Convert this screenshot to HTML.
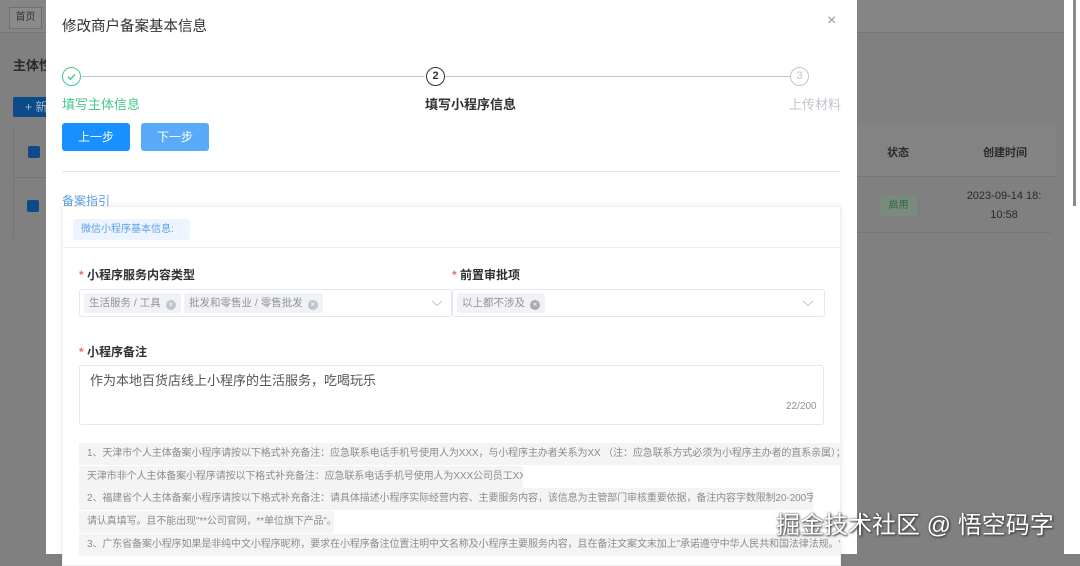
<!DOCTYPE html>
<html><head><meta charset="utf-8"><style>
*{margin:0;padding:0;box-sizing:border-box}
body{width:1080px;height:554px;overflow:hidden;position:relative;background:#808080;font-family:"Liberation Sans","Noto Sans CJK SC",sans-serif;}
.a{position:absolute}
.modal{left:46px;top:0;width:811px;height:554px;background:#fff}
.t{white-space:nowrap}
.note{position:absolute;left:79px;height:22px;background:#f4f4f5;color:#8c8c8c;font-size:10px;letter-spacing:-0.1px;line-height:22px;padding-left:8px;white-space:nowrap;overflow:hidden;border-radius:2px}
.tag{position:absolute;top:293px;height:20px;background:#f0f2f5;color:#909399;font-size:10.5px;line-height:20px;padding:0 5px;border-radius:3px;white-space:nowrap}
.x{display:inline-block;width:10px;height:10px;border-radius:50%;background:#c0c4cc;color:#fff;font-size:8px;line-height:10px;text-align:center;margin-left:5px;vertical-align:-1px}
</style></head><body>
<div class="a" style="left:0;top:0;width:1065px;height:33px;background:#858585;border-bottom:1px solid #767676"></div>
<div class="a t" style="left:9px;top:7px;width:33px;height:22px;border:1px solid #707070;color:#333;font-size:10px;line-height:20px;text-align:center;background:#8a8a8a">首页</div>
<div class="a t" style="left:13px;top:55px;font-size:13px;font-weight:bold;color:#2a2a2a">主体性</div>
<div class="a" style="left:13px;top:97px;width:40px;height:20px;background:#0d4a8a;border-radius:2px;color:#a0b8d0;font-size:12px;line-height:20px;padding-left:12px">+ 新</div>
<div class="a" style="left:13px;top:128px;width:1px;height:110px;background:#757575"></div>
<div class="a" style="left:28px;top:146px;width:12px;height:12px;background:#0d4a8a;border-radius:2px"></div>
<div class="a" style="left:27px;top:200px;width:12px;height:12px;background:#0d4a8a;border-radius:2px"></div>
<div class="a" style="left:13px;top:177px;width:33px;height:1px;background:#757575"></div>
<div class="a" style="left:857px;top:125px;width:200px;height:52px;background:#838383;border-bottom:1px solid #777"></div>
<div class="a t" style="left:887px;top:144px;font-size:11px;font-weight:bold;color:#2a2a2a">状态</div>
<div class="a t" style="left:968px;top:144px;font-size:11px;font-weight:bold;color:#2a2a2a;width:74px;text-align:center">创建时间</div>
<div class="a" style="left:880px;top:195px;width:37px;height:21px;background:#7a8a7e;color:#2e6b3f;font-size:10px;line-height:21px;text-align:center">启用</div>
<div class="a" style="left:960px;top:187px;width:88px;font-size:11px;color:#2a2a2a;text-align:center;line-height:19px">2023-09-14 18:<br>10:58</div>
<div class="a" style="left:857px;top:232px;width:195px;height:1px;background:#777"></div>
<div class="a" style="left:1064px;top:0;width:16px;height:554px;background:#fff"></div>
<div class="a" style="left:1073px;top:0;width:3px;height:206px;background:#8a8a8a"></div>

<div class="a modal"></div>
<div class="a t" style="left:62px;top:15px;font-size:14.5px;color:#303133">修改商户备案基本信息</div>
<div class="a t" style="left:827px;top:12px;font-size:16px;color:#999">×</div>
<div class="a" style="left:82px;top:76px;width:343px;height:1px;background:#c0c4cc"></div>
<div class="a" style="left:445px;top:76px;width:345px;height:1px;background:#c0c4cc"></div>
<div class="a" style="left:62px;top:67px;width:19px;height:19px;border:1.5px solid #45c98a;border-radius:50%"></div>
<svg class="a" style="left:62px;top:67px" width="19" height="19"><path d="M6 9.8 L8.6 12.2 L13 7.3" fill="none" stroke="#45c98a" stroke-width="1.4"/></svg>
<div class="a" style="left:426px;top:67px;width:19px;height:19px;border:1.5px solid #303133;border-radius:50%;font-size:11px;font-weight:bold;text-align:center;line-height:16px;color:#303133">2</div>
<div class="a" style="left:790px;top:67px;width:19px;height:19px;border:1.5px solid #c0c4cc;border-radius:50%;font-size:11px;text-align:center;line-height:16px;color:#c0c4cc">3</div>
<div class="a t" style="left:62px;top:94px;font-size:13px;color:#45c98a">填写主体信息</div>
<div class="a t" style="left:425px;top:94px;font-size:13px;font-weight:bold;color:#303133">填写小程序信息</div>
<div class="a t" style="left:789px;top:94px;font-size:13px;color:#c0c4cc">上传材料</div>
<div class="a" style="left:62px;top:123px;width:68px;height:28px;background:#1890ff;border-radius:3px;color:#fff;font-size:12px;line-height:28px;text-align:center">上一步</div>
<div class="a" style="left:141px;top:123px;width:68px;height:28px;background:#5aabf7;border-radius:3px;color:#fff;font-size:12px;line-height:28px;text-align:center">下一步</div>
<div class="a" style="left:62px;top:171px;width:778px;height:1px;background:#e4e7ed"></div>
<div class="a t" style="left:62px;top:192px;font-size:12px;color:#5a9fe6">备案指引</div>
<div class="a" style="left:62px;top:206px;width:779px;height:360px;background:#fff;box-shadow:0 0 6px rgba(0,0,0,.08);border:1px solid #f0f0f0"></div>
<div class="a t" style="left:73px;top:219px;width:117px;height:21px;background:#ecf5ff;border-radius:3px;color:#5a9fe6;font-size:10px;line-height:21px;padding-left:8px">微信小程序基本信息:</div>
<div class="a" style="left:63px;top:247px;width:777px;height:1px;background:#eeeeee"></div>
<div class="a t" style="left:79px;top:266px;font-size:12px;font-weight:bold;color:#303133"><span style="color:#f56c6c">* </span>小程序服务内容类型</div>
<div class="a t" style="left:452px;top:266px;font-size:12px;font-weight:bold;color:#303133"><span style="color:#f56c6c">* </span>前置审批项</div>
<div class="a" style="left:79px;top:289px;width:373px;height:28px;border:1px solid #e4e7ed;border-radius:3px"></div>
<div class="a" style="left:452px;top:289px;width:373px;height:28px;border:1px solid #e4e7ed;border-radius:3px"></div>
<div class="tag" style="left:84px">生活服务 / 工具<span class="x">×</span></div>
<div class="tag" style="left:184px">批发和零售业 / 零售批发<span class="x">×</span></div>
<div class="tag" style="left:457px">以上都不涉及<span class="x" style="background:#a8abb2">×</span></div>
<svg class="a" style="left:431px;top:298px" width="12" height="10"><path d="M1 3 L6 7.5 L11 3" fill="none" stroke="#c0c4cc" stroke-width="1"/></svg>
<svg class="a" style="left:802px;top:298px" width="12" height="10"><path d="M1 3 L6 7.5 L11 3" fill="none" stroke="#c0c4cc" stroke-width="1"/></svg>
<div class="a t" style="left:79px;top:343px;font-size:12px;font-weight:bold;color:#303133"><span style="color:#f56c6c">* </span>小程序备注</div>
<div class="a" style="left:79px;top:365px;width:745px;height:60px;border:1px solid #e4e7ed;border-radius:3px"></div>
<div class="a t" style="left:90px;top:370px;font-size:13px;color:#555">作为本地百货店线上小程序的生活服务，吃喝玩乐</div>
<div class="a t" style="left:786px;top:401px;font-size:10px;color:#909399">22/200</div>
<div class="note" style="top:443px;width:763px">1、天津市个人主体备案小程序请按以下格式补充备注：应急联系电话手机号使用人为XXX，与小程序主办者关系为XX （注：应急联系方式必须为小程序主办者的直系亲属）；</div>
<div class="note" style="top:466px;width:444px">天津市非个人主体备案小程序请按以下格式补充备注：应急联系电话手机号使用人为XXX公司员工XXX。</div>
<div class="note" style="top:488px;width:734px">2、福建省个人主体备案小程序请按以下格式补充备注：请具体描述小程序实际经营内容、主要服务内容，该信息为主管部门审核重要依据，备注内容字数限制20-200字，</div>
<div class="note" style="top:511px;width:255px">请认真填写。且不能出现"**公司官网，**单位旗下产品"。</div>
<div class="note" style="top:534px;width:761px">3、广东省备案小程序如果是非纯中文小程序昵称，要求在小程序备注位置注明中文名称及小程序主要服务内容，且在备注文案文末加上"承诺遵守中华人民共和国法律法规。"，</div>
<div class="a t" style="left:776px;top:505px;font-size:24px;color:#fff;text-shadow:1px 1px 2px #333,0 0 2px #555">掘金技术社区 @ 悟空码字</div>
</body></html>
